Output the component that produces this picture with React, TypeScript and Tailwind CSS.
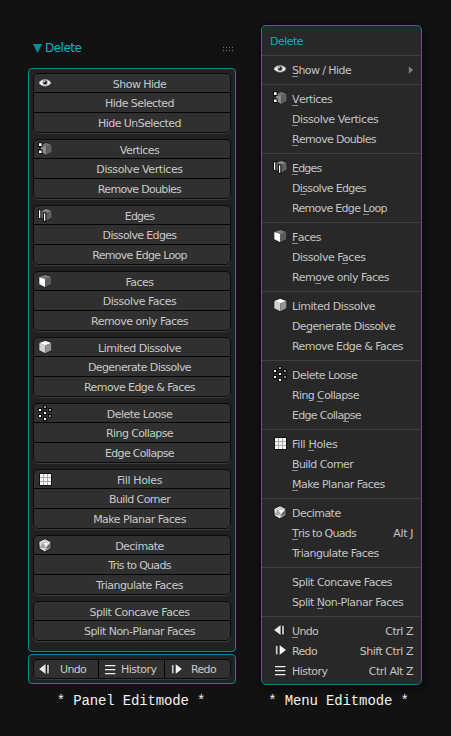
import React from "react";

type IconName =
  | "eye" | "vertices" | "edges" | "faces" | "cube" | "loose" | "grid" | "decimate" | "undo" | "redo" | "history";

// "accel" is the index of the underlined shortcut letter in the menu.
type Item = { label: string; track: number; accel?: number; keys?: string; keysTrack?: number };
type Group = { icon?: IconName; items: Item[] };

const editGroups: Group[] = [
  { icon: "vertices", items: [
    { label: "Vertices", track: -0.57, accel: 0 },
    { label: "Dissolve Vertices", track: -0.42, accel: 0 },
    { label: "Remove Doubles", track: -0.68, accel: 0 },
  ] },
  { icon: "edges", items: [
    { label: "Edges", track: -0.8, accel: 0 },
    { label: "Dissolve Edges", track: -0.65, accel: 1 },
    { label: "Remove Edge Loop", track: -0.69, accel: 12 },
  ] },
  { icon: "faces", items: [
    { label: "Faces", track: -0.55, accel: 0 },
    { label: "Dissolve Faces", track: -0.48, accel: 10 },
    { label: "Remove only Faces", track: -0.5, accel: 3 },
  ] },
  { icon: "cube", items: [
    { label: "Limited Dissolve", track: -0.47 },
    { label: "Degenerate Dissolve", track: -0.61, accel: 2 },
    { label: "Remove Edge & Faces", track: -0.58 },
  ] },
  { icon: "loose", items: [
    { label: "Delete Loose", track: -0.52 },
    { label: "Ring Collapse", track: -0.62, accel: 5 },
    { label: "Edge Collapse", track: -0.7, accel: 10 },
  ] },
  { icon: "grid", items: [
    { label: "Fill Holes", track: -0.35, accel: 5 },
    { label: "Build Corner", track: -0.58, accel: 0 },
    { label: "Make Planar Faces", track: -0.5, accel: 0 },
  ] },
  { icon: "decimate", items: [
    { label: "Decimate", track: -0.53 },
    { label: "Tris to Quads", track: -0.7, accel: 0, keys: "Alt J", keysTrack: -0.4 },
    { label: "Triangulate Faces", track: -0.5 },
  ] },
  { items: [
    { label: "Split Concave Faces", track: -0.5 },
    { label: "Split Non-Planar Faces", track: -0.52, accel: 6 },
  ] },
];

const showHide: Group = { icon: "eye", items: [
  { label: "Show Hide", track: -0.55 },
  { label: "Hide Selected", track: -0.57 },
  { label: "Hide UnSelected", track: -0.55 },
] };

const history: { icon: IconName; item: Item }[] = [
  { icon: "undo", item: { label: "Undo", track: -0.65, accel: 0, keys: "Ctrl Z" } },
  { icon: "redo", item: { label: "Redo", track: -0.65, keys: "Shift Ctrl Z" } },
  { icon: "history", item: { label: "History", track: -0.5, keys: "Ctrl Alt Z" } },
];

function Cube({ top, left, right }: { top: string; left: string; right: string }) {
  return (
    <g>
      <path d="M8.3 .6 14.3 2.9V10.3L8.3 13.5 2.2 10.3V2.9Z" fill="#161616" stroke="#161616" strokeWidth=".8" strokeLinejoin="round" />
      <path d="M8.3 .8 14.3 3 8.3 5.4 2.3 3Z" fill={top} />
      <path d="M2.3 3 8.3 5.2V13.3L2.3 10.2Z" fill={left} />
      <path d="M14.3 3 8.3 5.2V13.3L14.3 10.2Z" fill={right} />
    </g>
  );
}

const looseDots: [number, number, string][] = [
  [2, 3, "#fff"], [2, 9, "#fff"], [7, 0, "#999"], [7, 6, "#fff"], [7, 12, "#fff"], [12, 3, "#999"], [12, 9, "#888"],
];

function Icon({ name }: { name: IconName }) {
  return (
    <svg width="16" height="16" viewBox="0 0 16 16" className="block shrink-0 overflow-visible">
      {name === "eye" && (
        <g>
          <path d="M1.6 7Q4 3.1 8 3.1T14.4 7Q12 10.4 8 10.4T1.6 7Z" fill="#f4f4f4" stroke="#151515" strokeWidth=".5" />
          <circle cx="8.1" cy="6.4" r="2.6" fill="#8a8a8a" />
          <circle cx="8.1" cy="6.4" r="1.5" fill="#111" />
          <circle cx="7.4" cy="5.6" r=".7" fill="#fff" />
        </g>
      )}
      {name === "vertices" && (
        <g>
          <g transform="translate(1.9 0) scale(.89 .98)"><Cube top="#707070" left="#8c8c8c" right="#606060" /></g>
          <path d="M1 .3h4.6v4.6h-4.6zM1 7.5h4.6v4.6h-4.6zM2 4h2v4h-2z" fill="#0c0c0c" />
          <path d="M2 1.2h2.6v2.7h-2.6zM2 8.4h2.6v2.7h-2.6z" fill="#fff" />
          <path d="M2.5 5.7h1v1h-1z" fill="#888" />
        </g>
      )}
      {name === "edges" && (
        <g>
          <g transform="translate(1.9 0) scale(.89 .96)"><Cube top="#858585" left="#666" right="#606060" /></g>
          <path d="M1 1.3h3.3v9.4h-3.3zM6 4.3h3.3v9.4h-3.3z" fill="#0c0c0c" />
          <path d="M2 2.3h1.3v7.6h-1.3zM7 5.3h1.3v7.4h-1.3z" fill="#fff" />
        </g>
      )}
      {name === "faces" && <Cube top="#7a7a7a" left="#fff" right="#5c5c5c" />}
      {name === "cube" && <Cube top="#fff" left="#d2d2d2" right="#939393" />}
      {name === "loose" && looseDots.map(([x, y, c]) => (
        <rect key={`${x}-${y}`} x={x - 0.5} y={y - 0.5} width="3" height="3" fill={c} stroke="#0a0a0a" />
      ))}
      {name === "grid" && (
        <g>
          <path d="M2 1h13v13h-13z" fill="#111" />
          <path d="M3 2h11v11h-11z" fill="#aaa" />
          <path d="M3 2h3v3h-3zM7 2h3v3h-3zM11 2h3v3h-3zM3 6h3v3h-3zM7 6h3v3h-3zM11 6h3v3h-3zM3 10h3v3h-3zM7 10h3v3h-3zM11 10h3v3h-3z" fill="#f4f4f4" />
        </g>
      )}
      {name === "decimate" && (
        <g>
          <path d="M8 .8 14 4V10.5L8 14 2 10.5V4Z" fill="#999" stroke="#111" strokeLinejoin="round" />
          <path d="M8 1.2 2.4 4 6 4.6Z" fill="#eee" />
          <path d="M8 1.2 13.6 4 6 4.6Z" fill="#ccc" />
          <path d="M6 4.6 13.2 4.4 8.8 9.8Z" fill="#f2f2f2" />
          <path d="M2.4 4 6 4.6 3 9.8Z" fill="#ddd" />
          <path d="M6 4.6 8.8 9.8 3 9.8Z" fill="#a5a5a5" />
          <path d="M2.6 10.2 8.8 9.8 8 13.4Z" fill="#ddd" />
          <path d="M13.6 4.6V10.2L8.8 9.8Z" fill="#6a6a6a" />
        </g>
      )}
      {name === "undo" && (
        <g stroke="#111" strokeWidth="1" paintOrder="stroke">
          <path d="M2 7 8.6 2V12Z" fill="#e6e6e6" />
          <path d="M10 2.8h2v8.6h-2z" fill="#bbb" />
        </g>
      )}
      {name === "redo" && (
        <g stroke="#111" strokeWidth="1" paintOrder="stroke">
          <path d="M14 7 7.6 2V12Z" fill="#f4f4f4" />
          <path d="M3.8 2.8h1.8v8.6h-1.8z" fill="#ccc" />
        </g>
      )}
      {name === "history" && <path d="M3 3h10.4v1.2h-10.4zM3 7h10.4v1.2h-10.4zM3 11h10.4v1.2h-10.4z" fill="#eee" />}
    </svg>
  );
}

function Label({ item, accel = false }: { item: Item; accel?: boolean }) {
  const { label, track } = item;
  const at = accel ? item.accel : undefined;
  return (
    <span className="whitespace-pre" style={{ letterSpacing: track }}>
      {at === undefined ? label : (
        <>
          {label.slice(0, at)}
          <span className="relative after:absolute after:bottom-0 after:left-0 after:h-px after:w-1.5 after:bg-[#8d8d8d]">{label[at]}</span>
          {label.slice(at + 1)}
        </>
      )}
    </span>
  );
}

function ButtonGroup({ group }: { group: Group }) {
  return (
    <div className="relative flex flex-col divide-y divide-[#050505] rounded-[5px] border border-[#0b0b0b] bg-[#303030] shadow-[0_1px_0_#3b3b3b]">
      {group.icon && <div className="absolute left-[3px] top-[2px]"><Icon name={group.icon} /></div>}
      {group.items.map((item, i) => (
        <div key={item.label} className={`flex items-center justify-center pl-[15px] ${i === 0 ? "h-[19px] pt-[2px]" : i === group.items.length - 1 ? "h-[19px] pt-px" : "h-5 pt-px"}`}>
          <Label item={item} />
        </div>
      ))}
    </div>
  );
}

function Panel() {
  return (
    <section className="w-52 text-[#c9c9c9]">
      <header className="flex h-[43px] items-start justify-between pl-[5px] pr-[3px] pt-[15px]">
        <div className="flex items-start gap-[3px]">
          <svg width="9" height="9" viewBox="0 0 9 9" className="mt-1"><path d="M0 0H9L4.5 9Z" fill="#0a8d99" /></svg>
          <span className="text-[12px] leading-4 tracking-[-0.5px] text-[#00b4c2]">Delete</span>
        </div>
        <div className="mt-[7px] grid grid-cols-4 gap-[2px]">
          {[0, 1, 2, 3, 4, 5, 6, 7].map((n) => <i key={n} className="block size-px bg-[#777]" />)}
        </div>
      </header>
      <div className="flex h-[584px] flex-col gap-1.5 rounded-[4px] border border-[#0a8791] bg-[#212121] p-1">
        <ButtonGroup group={showHide} />
        {editGroups.map((g) => <ButtonGroup key={g.items[0].label} group={g} />)}
      </div>
      <div className="mt-[2px] h-[30px] rounded-[4px] border border-[#0a8791] bg-[#212121] p-1">
        <div className="flex h-5 divide-x divide-[#050505] rounded-[5px] border border-[#0b0b0b] bg-[#303030] shadow-[0_1px_0_#3b3b3b]">
          <div className="flex w-[65px] items-center gap-[7px] pl-[3px] pt-px"><Icon name="undo" /><Label item={history[0].item} /></div>
          <div className="flex w-[66px] items-center gap-[3px] pl-[3px] pt-px"><Icon name="history" /><Label item={history[2].item} /></div>
          <div className="flex flex-1 items-center gap-[7px] pl-[3px] pt-px"><Icon name="redo" /><Label item={history[1].item} /></div>
        </div>
      </div>
    </section>
  );
}

function MenuRow({ item, icon, submenu }: { item: Item; icon?: IconName; submenu?: boolean }) {
  return (
    <div className="flex h-5 items-start pl-[10px] pr-2">
      <div className="mt-[2px] w-5">{icon && <Icon name={icon} />}</div>
      <div className="flex flex-1 justify-between pt-1 leading-[13px]">
        <Label item={item} accel />
        {item.keys && <span className="whitespace-pre" style={{ letterSpacing: item.keysTrack ?? -0.48 }}>{item.keys}</span>}
        {submenu && <svg width="6" height="10" viewBox="0 0 6 10" className="-mr-px mt-px"><path d="M.5 .5 5.5 5 .5 9.5Z" fill="#808080" stroke="#141414" strokeWidth=".5" /></svg>}
      </div>
    </div>
  );
}

function Menu() {
  return (
    <section className="h-[660px] w-[161px] divide-y divide-[#3e3e3e] rounded-[5px] border border-[#0a7f88] bg-[#282828] text-[#c4c4c4] shadow-[0_2px_6px_2px_rgba(0,0,0,0.5)]">
      <h2 className="h-[30px] pl-2 pt-[9px] leading-[14px] tracking-[-0.5px] text-[#00b4c2]">Delete</h2>
      <div className="py-1"><MenuRow icon="eye" item={{ label: "Show / Hide", track: -0.58, accel: 0 }} submenu /></div>
      {editGroups.map((g) => (
        <div key={g.items[0].label} className="py-1">
          {g.items.map((item, i) => <MenuRow key={item.label} item={item} icon={i === 0 ? g.icon : undefined} />)}
        </div>
      ))}
      <div className="pt-1">
        {history.map(({ icon, item }) => <MenuRow key={icon} icon={icon} item={item} />)}
      </div>
    </section>
  );
}

function Caption({ children }: { children: string }) {
  return <p className="h-4 whitespace-pre text-center font-['Liberation_Mono',monospace] text-[14px] leading-4 tracking-[-0.15px] text-[#f2f2f2]">{children}</p>;
}

export default function App() {
  return (
    <main className="flex h-[736px] w-[451px] gap-[25px] overflow-hidden bg-[#121212] pl-7 pt-[25px] font-['DejaVu_Sans',sans-serif] text-[11px] leading-[13px]">
      <div className="w-52">
        <Panel />
        <div className="mr-[2px] mt-[9px]"><Caption>* Panel Editmode *</Caption></div>
      </div>
      <div className="w-[161px]">
        <Menu />
        <div className="-ml-3 -mr-[6px] mt-2"><Caption>* Menu Editmode *</Caption></div>
      </div>
    </main>
  );
}
